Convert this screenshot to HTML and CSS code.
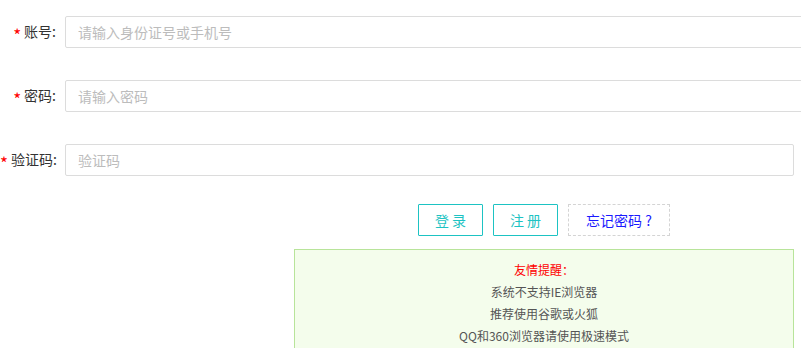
FILE: index.html
```html
<!DOCTYPE html>
<html lang="zh-CN">
<head>
<meta charset="utf-8">
<title>登录</title>
<link rel="stylesheet" href="styles.css">
</head>
<body>
<div class="page">
  <form class="login-form">
    <div class="row">
      <label class="label"><span class="req">*</span>账号:</label>
      <input class="field wide" type="text" placeholder="请输入身份证号或手机号">
    </div>
    <div class="row">
      <label class="label"><span class="req">*</span>密码:</label>
      <input class="field wide" type="password" placeholder="请输入密码">
    </div>
    <div class="row">
      <label class="label"><span class="req">*</span>验证码:</label>
      <input class="field narrow" type="text" placeholder="验证码">
    </div>
    <div class="side">
      <div class="actions">
        <button type="button" class="btn btn-main">登 录</button>
        <button type="button" class="btn btn-main">注 册</button>
        <button type="button" class="btn btn-forget">忘记密码 ?</button>
      </div>
      <div class="tips">
        <p class="tips-title">友情提醒：</p>
        <p>系统不支持IE浏览器</p>
        <p>推荐使用谷歌或火狐</p>
        <p>QQ和360浏览器请使用极速模式</p>
      </div>
    </div>
  </form>
</div>
</body>
</html>
```

FILE: styles.css
```css
html, body {
  margin: 0;
  padding: 0;
  overflow: hidden;
  background: #fff;
}
body {
  font-family: "Noto Sans CJK SC", "Noto Sans", sans-serif;
  font-size: 14px;
  color: #333;
}
.page {
  width: 801px;
  height: 348px;
  overflow: hidden;
}
.login-form {
  padding-top: 16px;
}
.row {
  display: flex;
  align-items: center;
  margin-bottom: 32px;
}
.label {
  width: 56px;
  margin-right: 9px;
  text-align: right;
  white-space: nowrap;
  font-size: 14px;
  color: #333;
  flex: none;
}
.req {
  color: #f00;
  margin-right: 3px;
  font-size: 17px;
  line-height: 1;
  vertical-align: -5px;
}
.field {
  box-sizing: border-box;
  height: 32px;
  border: 1px solid #dcdcdc;
  border-radius: 2px;
  padding: 0 12px;
  font-family: inherit;
  font-size: 14px;
  color: #333;
  outline: none;
  flex: none;
}
.field::placeholder {
  color: #bcbcbc;
}
.wide {
  width: 780px;
}
.narrow {
  width: 729px;
}
.side {
  margin-left: 294px;
  width: 500px;
  margin-top: -4px;
}
.actions {
  display: flex;
  justify-content: center;
  gap: 10px;
  margin-bottom: 13px;
}
.btn {
  box-sizing: border-box;
  height: 32px;
  background: #fff;
  font-family: inherit;
  font-size: 14px;
  padding: 0;
  cursor: pointer;
}
.btn-main {
  width: 65px;
  border: 1px solid #1dc3c3;
  color: #1dc3c3;
  border-radius: 1px;
}
.btn-forget {
  width: 102px;
  border: 1px dashed #d4d4d4;
  color: #1a1aff;
}
.tips {
  box-sizing: border-box;
  border: 1px solid #b8e49a;
  background: #f4fdec;
  padding: 9px 0 12px;
  text-align: center;
  font-size: 12px;
  line-height: 22px;
  color: #555;
}
.tips p {
  margin: 0;
}
.tips .tips-title {
  color: #f00;
}
```
